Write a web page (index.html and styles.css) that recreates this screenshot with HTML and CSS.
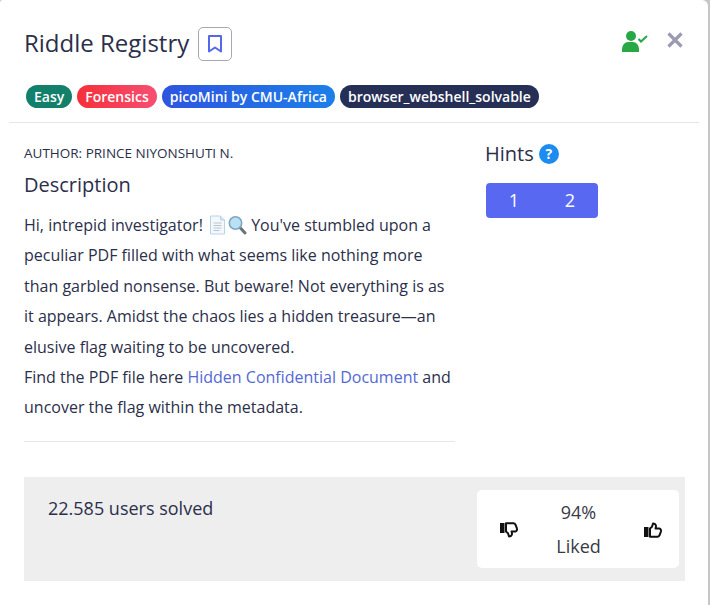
FILE: index.html
```html
<!DOCTYPE html>
<html lang="en">

<head>
    <meta charset="utf-8">
    <title>Riddle Registry</title>
    <link rel="stylesheet" href="styles.css">
</head>

<body>
    <div class="modal">
        <div class="modal-header">
            <div class="title-row">
                <h1>Riddle Registry</h1>
                <button class="bookmark">
                    <svg width="14" height="18" viewBox="0 0 14 18"><path d="M1 1h12v15.500l-6-4-6 4z" fill="none" stroke="#5468e8" stroke-width="2" stroke-linejoin="round"/></svg>
                </button>
                <div class="header-icons">
                    <svg class="solved-icon" width="26" height="21" viewBox="0 0 26 21">
                        <circle cx="9" cy="5" r="5" fill="#28a745"/>
                        <path d="M0 21v-2.500C0 14 3 11 6 11h5c3 0 6 3 6 7.500V21z" fill="#28a745"/>
                        <path d="M16.500 8l2.500 2.500L25 5" fill="none" stroke="#28a745" stroke-width="2"/>
                    </svg>
                    <svg width="16" height="16" viewBox="0 0 16 16"><path d="M1.500 1.500l13 13M14.500 1.500l-13 13" stroke="#9a9ab0" stroke-width="3.200"/></svg>
                </div>
            </div>
            <div class="tags">
                <span class="tag tag-easy">Easy</span>
                <span class="tag tag-cat">Forensics</span>
                <span class="tag tag-event">picoMini by CMU-Africa</span>
                <span class="tag tag-dark">browser_webshell_solvable</span>
            </div>
        </div>

        <div class="modal-body">
            <div class="main-col">
                <div class="author">AUTHOR: PRINCE NIYONSHUTI N.</div>
                <h2>Description</h2>
                <p class="desc">Hi, intrepid investigator!
                    <svg class="emoji" width="19" height="20" viewBox="0 0 18 20">
                        <path d="M2 1h10l4 4v14H2z" fill="#f4f8fc" stroke="#b5d3ea"/>
                        <path d="M12 1v4h4" fill="#d5e6f3" stroke="#b5d3ea"/>
                        <path d="M5 8h8M5 10.500h8M5 13h8M5 15.500h6" stroke="#b9c4cc"/>
                    </svg><svg class="emoji" width="20" height="20" viewBox="0 0 19 20">
                        <path d="M12 12l5.500 6" stroke="#6b7278" stroke-width="3" stroke-linecap="round"/>
                        <circle cx="8" cy="8" r="6.200" fill="#b9e0f5" stroke="#7fa8bf" stroke-width="1.600"/>
                    </svg>
                    You've stumbled upon a peculiar PDF filled with what seems like nothing more than garbled nonsense. But beware! Not everything is as it appears. Amidst the chaos lies a hidden treasure—an elusive flag waiting to be uncovered.<br>
                    Find the PDF file here <a href="#">Hidden Confidential Document</a> and uncover the flag within the metadata.</p>
                <hr>
            </div>
            <div class="side-col">
                <h2 class="hints-title">Hints <span class="help">?</span></h2>
                <div class="hint-tabs">
                    <span>1</span>
                    <span>2</span>
                </div>
            </div>
        </div>

        <div class="stats">
            <div class="solved">22.585 users solved</div>
            <div class="likes">
                <svg class="thumb-down" width="18" height="16" viewBox="0 0 18 16">
                    <rect x="0" y="1" width="4.500" height="10" fill="#111"/>
                    <path d="M6 1.200h7.500c1 0 1.500.500 2 1.500l1.300 3.500c.500 1.500 0 3.300-1.500 3.300h-3.800c1 2.500.500 5-2.500 5l-1-3.300-2-1.700z" fill="none" stroke="#111" stroke-width="2" stroke-linejoin="round"/>
                </svg>
                <div class="like-text">
                    <div>94%</div>
                    <div>Liked</div>
                </div>
                <svg class="thumb-up" width="18" height="16" viewBox="0 0 18 16">
                    <rect x="0" y="5" width="4.500" height="10" fill="#111"/>
                    <path d="M6 14.800h7.500c1 0 1.500-.500 2-1.500l1.300-3.500c.500-1.500 0-3.300-1.500-3.300h-3.800c1-2.500.500-5-2.500-5l-1 3.300-2 1.700z" fill="none" stroke="#111" stroke-width="2" stroke-linejoin="round"/>
                </svg>
            </div>
        </div>
    </div>
</body>
</html>
```

FILE: styles.css
```css
body {
    font-family: "Open Sans", "Noto Sans", sans-serif;
    background-color: #c6c6ca;
    margin: 0;
    width: 710px;
    height: 605px;
    overflow: hidden;
    border-right: 1px solid #fff;
    color: #2b2f4a;
}

.modal {
    width: 708px;
    height: 605px;
    box-sizing: border-box;
    background-color: #fff;
    border-radius: 3px 6px 0 0;
}

.modal-header {
    margin: 0 9px 0 9px;
    padding: 25px 0 14px 15px;
    border-bottom: 1px solid #e6e6e6;
}

.title-row {
    display: flex;
    align-items: center;
    height: 36px;
}

h1 {
    font-size: 24px;
    font-weight: 400;
    margin: 0;
    line-height: 36px;
}

.bookmark {
    width: 34px;
    height: 34px;
    margin: 2px 0 0 9px;
    padding: 0;
    background: #fff;
    border: 1px solid #a8a8b4;
    border-radius: 5px;
    display: flex;
    align-items: center;
    justify-content: center;
}

.header-icons {
    margin-left: auto;
    margin-right: 16px;
    display: flex;
    align-items: center;
    gap: 19px;
    margin-top: -6px;
}

.solved-icon {
    margin-top: 3px;
}

.tags {
    display: flex;
    gap: 5px;
    margin-top: 24px;
    padding-left: 2px;
}

.tag {
    font-size: 14px;
    font-weight: 600;
    line-height: 23px;
    padding: 0 8px;
    color: #fff;
    border-radius: 12px;
}

.tag-easy { background-color: #12806a; }
.tag-cat { background: linear-gradient(to right, #f52f3a, #f64f72); }
.tag-event { background: linear-gradient(to right, #2e55e0, #1c7fe8); }
.tag-dark { background-color: #262f55; }

.modal-body {
    display: flex;
    padding: 0 24px;
}

.main-col {
    width: 431px;
}

.author {
    font-size: 13.500px;
    line-height: 18px;
    margin-top: 21px;
}

h2 {
    font-size: 20px;
    font-weight: 400;
    line-height: 30px;
    margin: 8px 0 0;
}

.desc {
    font-size: 16px;
    line-height: 30.4px;
    margin: 10px 0 0;
}

.emoji {
    vertical-align: -4px;
}

.emoji:first-of-type {
    margin-left: 1px;
}

a {
    color: #5468d4;
    text-decoration: none;
}

hr {
    border: none;
    border-top: 1px solid #e6e6e6;
    margin: 18px 0 0;
}

.side-col {
    margin-left: 30px;
    padding-top: 16px;
}

.hints-title {
    margin: 0;
    display: flex;
    align-items: center;
    gap: 5px;
}

.help {
    width: 20px;
    height: 20px;
    border-radius: 50%;
    background-color: #1c8cf0;
    color: #fff;
    font-size: 14px;
    font-weight: 700;
    line-height: 20px;
    text-align: center;
}

.hint-tabs {
    display: flex;
    width: 112px;
    height: 35px;
    margin: 14px 0 0 1px;
    background-color: #5868f0;
    border-radius: 4px;
    color: #fff;
    font-size: 18px;
    line-height: 35px;
}

.hint-tabs span {
    flex: 1;
    text-align: center;
}

.stats {
    display: flex;
    justify-content: space-between;
    height: 104px;
    margin: 35px 23px 0 24px;
    background-color: #eeeeef;
}

.solved {
    font-size: 18px;
    line-height: 27px;
    padding: 18px 0 0 24px;
}

.likes {
    display: flex;
    align-items: center;
    justify-content: space-between;
    box-sizing: border-box;
    width: 202px;
    height: 78px;
    margin: 13px 6px 0 0;
    padding: 0 17px 0 23px;
    background-color: #fff;
    border-radius: 5px;
}

.thumb-down,
.thumb-up {
    margin-top: 2px;
}

.like-text {
    margin-right: 5px;
    text-align: center;
    font-size: 18px;
    line-height: 34px;
    color: #3a3a44;
}
```
